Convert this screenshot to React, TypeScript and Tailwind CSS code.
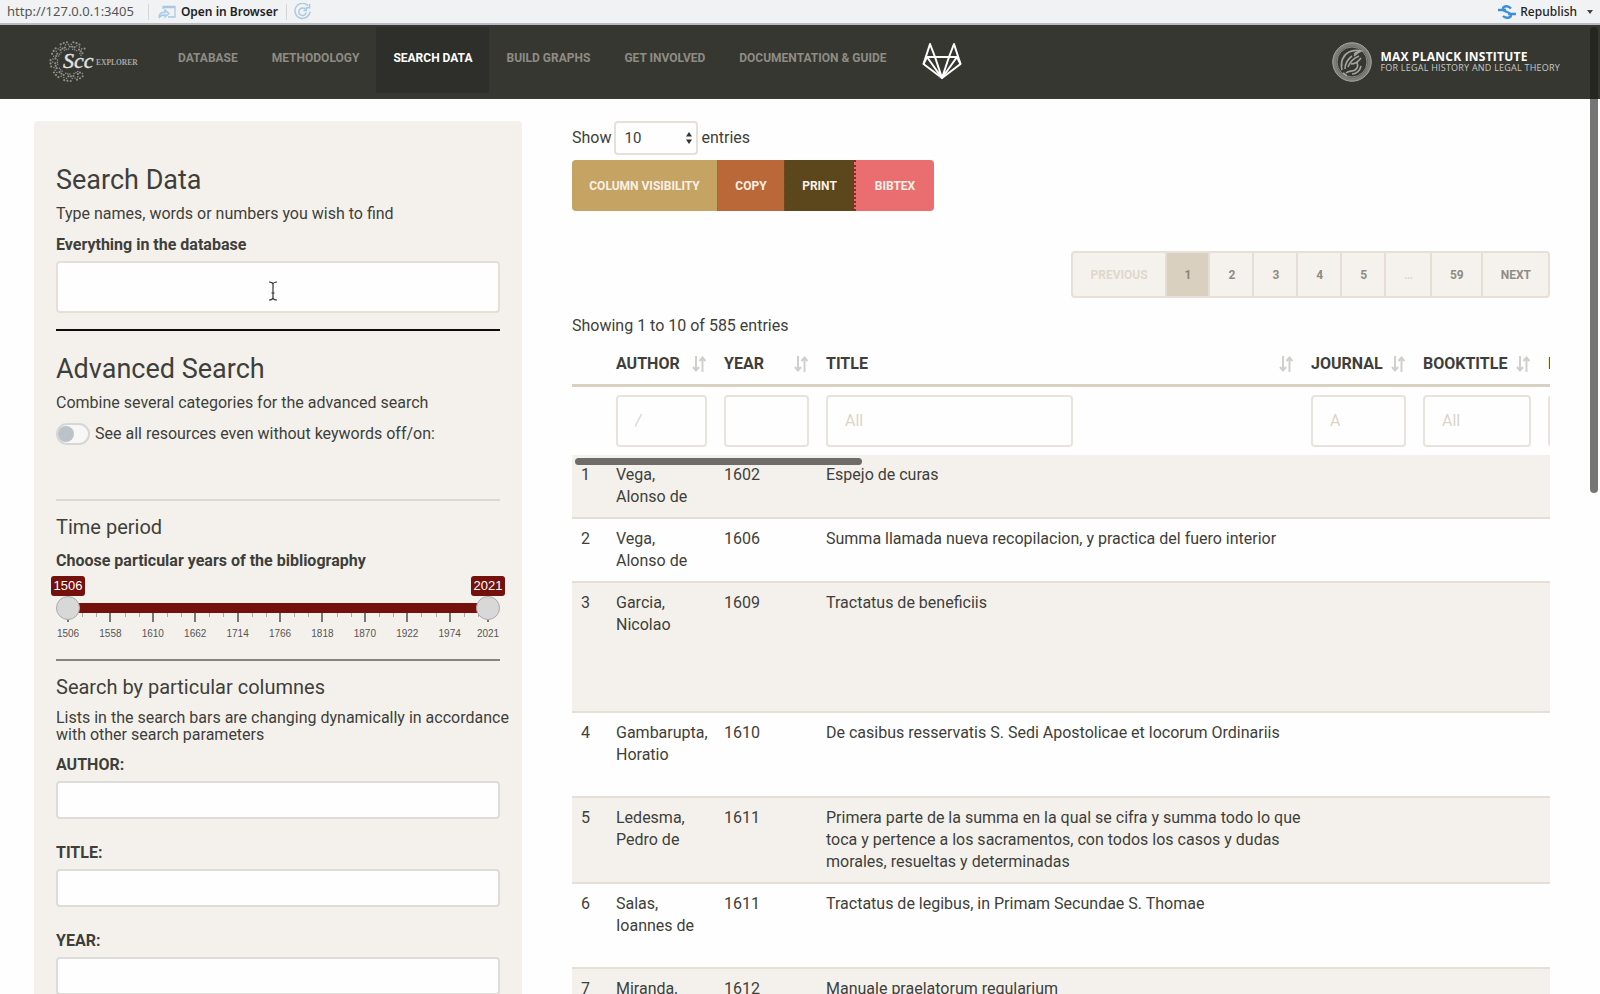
import type { ReactNode } from "react";

const ink = "text-[#3e3f3a]";

function SccLogo() {
  const dots: ReactNode[] = [];
  for (let ring = 0; ring < 4; ring++) {
    for (let i = 0; i < 30; i++) {
      const a = ((40 + i * 9.6 + ring * 4) * Math.PI) / 180;
      if ((i * 7 + ring * 5) % 4 === 0) continue;
      const r = 19.5 - ring * 2.3;
      dots.push(
        <circle key={`${ring}-${i}`} cx={21 + r * Math.cos(a)} cy={20.5 + r * Math.sin(a)} r={ring % 2 ? 0.8 : 1.1} />,
      );
    }
  }
  return (
    <svg viewBox="0 0 90 42" className="h-[42px] w-[90px]" role="img" aria-label="SCC Explorer">
      <g fill="#8f8f89">{dots}</g>
      <text x="14" y="27" fontFamily="Liberation Serif, serif" fontSize="22" fontStyle="italic" fill="#e4e4e0" stroke="#e4e4e0" strokeWidth="0.4">Scc</text>
      <text x="47" y="24" fontFamily="Liberation Serif, serif" fontSize="7.500" fontWeight="bold" fill="#a8a8a2">EXPLORER</text>
    </svg>
  );
}

function FoxLogo() {
  return (
    <svg viewBox="0 0 40 38" className="h-[38px] w-10" fill="none" stroke="#fff" strokeWidth="2" strokeLinejoin="round" aria-hidden="true">
      <path d="M20 36 L1.5 22 L8 2 L13 15 H27 L32 2 L38.500 22 Z" />
      <path d="M13 15 L20 36 L27 15 M5 15 H13 M27 15 H35 M5 15 L20 36 L35 15 M1.500 22 L5 15 M38.500 22 L35 15" />
    </svg>
  );
}

function Seal() {
  return (
    <svg viewBox="0 0 40 40" className="h-10 w-10" fill="none" stroke="#a5a5a0" aria-hidden="true">
      <circle cx="20" cy="20" r="17.500" stroke="#7d7d78" strokeWidth="4" />
      <circle cx="20" cy="20" r="19.200" strokeWidth="1" />
      <circle cx="20" cy="20" r="15" strokeWidth="0.800" />
      <path strokeWidth="1.600" d="M10 28c-2-8 1-15 7-18 4-2 8-2 12-1-3 1-5 3-7 5M13 27c0-6 3-10 7-13M16 25c2-5 6-9 11-11M19 22c3 0 7-2 10-6M12 14c-2 4-3 7-2 10M14 31c3-3 6-1 9-3s3-5 2-8M20 32c4 0 8-3 9-8M27 9l-5 3M11 31l4 3" />
    </svg>
  );
}

const navItems = ["Database", "Methodology", "Search data", "Build graphs", "Get involved", "Documentation & Guide"];

function SortIcon() {
  return (
    <svg viewBox="0 0 14 16" className="h-4 w-[14px] shrink-0" fill="none" stroke="#cfcfcb" strokeWidth="2" aria-hidden="true">
      <path d="M4 0V14M1 11L4 14.500L7 11" />
      <path d="M10.500 16V2M7.500 5L10.500 1.500L13.500 5" />
    </svg>
  );
}

const columns = [
  { name: "", placeholder: "", input: "" },
  { name: "Author", placeholder: "/", input: "w-full italic" },
  { name: "Year", placeholder: "", input: "w-full" },
  { name: "Title", placeholder: "All", input: "w-[247px]" },
  { name: "Journal", placeholder: "A", input: "w-full" },
  { name: "Booktitle", placeholder: "All", input: "w-full" },
  { name: "Publisher", placeholder: "All", input: "w-full" },
];

const rows = [
  { n: 1, author: ["Vega,", "Alonso de"], year: 1602, title: "Espejo de curas", h: "h-[63px]" },
  { n: 2, author: ["Vega,", "Alonso de"], year: 1606, title: "Summa llamada nueva recopilacion, y practica del fuero interior", h: "h-16" },
  { n: 3, author: ["Garcia,", "Nicolao"], year: 1609, title: "Tractatus de beneficiis", h: "h-[130px]" },
  { n: 4, author: ["Gambarupta,", "Horatio"], year: 1610, title: "De casibus resservatis S. Sedi Apostolicae et locorum Ordinariis", h: "h-[85px]" },
  { n: 5, author: ["Ledesma,", "Pedro de"], year: 1611, title: "Primera parte de la summa en la qual se cifra y summa todo lo que toca y pertence a los sacramentos, con todos los casos y dudas morales, resueltas y determinadas", h: "h-[86px]" },
  { n: 6, author: ["Salas,", "Ioannes de"], year: 1611, title: "Tractatus de legibus, in Primam Secundae S. Thomae", h: "h-[85px]" },
  { n: 7, author: ["Miranda,", "Luis de"], year: 1612, title: "Manuale praelatorum regularium", h: "h-16" },
];

const years = [1506, 1558, 1610, 1662, 1714, 1766, 1818, 1870, 1922, 1974, 2021];
const pct = (y: number) => ((y - 1506) / 515) * 100;

function YearSlider() {
  const minor: number[] = [];
  for (let y = 1506; y < 2021; y += 52) for (let k = 1; k < 3; k++) minor.push(y + (k * 52) / 3);
  return (
    <div className="relative mx-3 mt-[3px] h-[62px] font-['Liberation_Sans',sans-serif]">
      <div className="absolute inset-x-0 top-[27px] h-[10px] bg-[#74110c]" />
      {minor.filter((y) => y < 2021).map((y) => (
        <span key={y} className="absolute top-[37px] h-1 w-px bg-[#aaa]" style={{ left: `${pct(y)}%` }} />
      ))}
      {years.map((y) => (
        <span key={y} className="absolute top-[37px] flex w-10 -translate-x-1/2 flex-col items-center" style={{ left: `${pct(y)}%` }}>
          <span className="h-[9px] w-0.5 bg-[#777]" />
          <span className="mt-[6px] text-[10px] leading-3 text-[#555]">{y}</span>
        </span>
      ))}
      {[1506, 2021].map((y) => (
        <span key={y} className="absolute top-0 flex w-[34px] -translate-x-1/2 flex-col items-center" style={{ left: `${pct(y)}%` }}>
          <span className="w-full rounded-[3px] bg-[#74110c] text-center text-[13px] leading-5 text-white">{y}</span>
          <input
            type="range"
            aria-label={y === 1506 ? "First year" : "Last year"}
            min={1506}
            max={2021}
            defaultValue={y}
            className="size-6 appearance-none rounded-full border border-[#ababab] bg-[#d8d8d8] [&::-webkit-slider-thumb]:appearance-none"
          />
        </span>
      ))}
    </div>
  );
}

function Sidebar() {
  return (
    <aside className="rounded-[4px] bg-[#f4f1ed] px-[22px] pt-[41px]">
      <h2 className="text-[27px] leading-9">Search Data</h2>
      <p className="mt-1 leading-6">Type names, words or numbers you wish to find</p>
      <label htmlFor="all" className="mt-[7px] block font-bold leading-6">Everything in the database</label>
      <div className="relative mt-1">
        <input id="all" className="block h-[52px] w-full rounded-[4px] border-2 border-[#e6dfd8] bg-[#fefefe] px-4" />
        <svg viewBox="0 0 10 20" className="absolute left-[212px] top-5 h-5 w-[10px]" fill="none" stroke="#333" strokeWidth="1.200" aria-hidden="true">
          <path d="M1 1C3 1 5 2 5 3.500C5 2 7 1 9 1M5 3V17M1 19C3 19 5 18 5 16.500C5 18 7 19 9 19M3.500 12H6.500" />
        </svg>
      </div>
      <hr className="mt-4 border-t-2 border-[#0c0c0c]" />

      <h2 className="mt-5 text-[27px] leading-9">Advanced Search</h2>
      <p className="mt-1 leading-6">Combine several categories for the advanced search</p>
      <label className="mt-[7px] flex items-center gap-[5px] leading-6">
        <input
          type="checkbox"
          className="h-[22px] w-[34px] appearance-none rounded-full border-2 border-[#d5d6d6] bg-[#f8f7f5] before:block before:size-4 before:translate-y-px before:rounded-full before:bg-[#bcc3c8]"
        />
        See all resources even without keywords off/on:
      </label>
      <hr className="mt-[53px] border-t-2 border-[#dad8d4]" />

      <h3 className="mt-3 text-xl leading-7">Time period</h3>
      <p className="mt-2 font-bold leading-6">Choose particular years of the bibliography</p>
      <YearSlider />
      <hr className="mt-[21px] border-t-2 border-[#85847f]" />

      <h3 className="mt-3 text-xl leading-7">Search by particular columnes</h3>
      <p className="-mr-3 mt-2 leading-[17px]">
        Lists in the search bars are changing dynamically in accordance with other search parameters
      </p>
      <div className="mt-[10px] flex flex-col gap-[22px]">
        {["Author", "Title", "Year"].map((name) => (
          <div key={name}>
            <label htmlFor={`f-${name}`} className="block font-bold uppercase leading-6">{name}:</label>
            <input id={`f-${name}`} className="mt-1 block h-[38px] w-full rounded-[4px] border-2 border-[#dddcd9] bg-[#fefefe] px-3" />
          </div>
        ))}
      </div>
    </aside>
  );
}

function Pagination() {
  const items = ["Previous", "1", "2", "3", "4", "5", "…", "59", "Next"];
  return (
    <nav aria-label="Pages" className="mt-10 flex justify-end">
      <div className="flex h-[47px] overflow-hidden rounded-[4px] border-2 border-[#e6e0d8] bg-[#f5f2ee]">
        {items.map((t) => (
          <button
            key={t}
            disabled={t === "Previous" || t === "…"}
            className={`border-r-2 border-[#e4ded5] pl-[18px] pr-[17px] text-[12px] font-bold uppercase last:border-r-0 ${
              t === "1" ? "bg-[#dad0c0] text-[#8a857a]" : t === "Previous" || t === "…" ? "text-[#dfd7ca]" : "text-[#8e8c84]"
            }`}
          >
            {t}
          </button>
        ))}
      </div>
    </nav>
  );
}

function Results() {
  return (
    <section className="min-w-0">
      <div className="flex h-[34px] items-center gap-[3px]">
        <label htmlFor="len">Show</label>
        <div className="relative">
          <select id="len" className="block h-[34px] w-[84px] appearance-none rounded-[4px] border-2 border-[#e6e0d8] bg-[#fefefe] pl-2 text-[15px]">
            <option>10</option>
          </select>
          <svg viewBox="0 0 6 12" className="pointer-events-none absolute right-[6px] top-[11px] h-3 w-[6px]" fill="#333" aria-hidden="true">
            <path d="M3 0L6 4.500H0ZM3 12L6 7.500H0Z" />
          </svg>
        </div>
        <span>entries</span>
      </div>
      <div className="mt-[5px] inline-flex h-[51px] overflow-hidden rounded-[4px] text-[12px] font-bold text-[#f8f0e8]">
        <button className="w-[145px] bg-[#c5a363] uppercase">Column visibility</button>
        <button className="w-[67px] border-l border-dotted border-[#8a6a3a] bg-[#ba6837] uppercase">Copy</button>
        <button className="w-[70px] border-l border-dotted border-[#7a4a22] bg-[#5c461b] uppercase">Print</button>
        <button className="w-20 border-l-2 border-dotted border-[#8c2a22] bg-[#ea6e70] uppercase">Bibtex</button>
      </div>
      <Pagination />
      <p className="mt-4 leading-6">Showing 1 to 10 of 585 entries</p>

      <div className="relative mt-[3px] overflow-hidden">
        <table className="w-[1093px] table-fixed border-collapse">
          <colgroup>
            <col className="w-[35px]" />
            <col className="w-[108px]" />
            <col className="w-[102px]" />
            <col className="w-[485px]" />
            <col className="w-[112px]" />
            <col className="w-[125px]" />
            <col className="w-[126px]" />
          </colgroup>
          <thead>
            <tr className="h-[44px] border-b-[3px] border-[#dbd1c3]">
              {columns.map((c) => (
                <th key={c.name} className="px-[9px] pt-1 text-left font-bold uppercase">
                  {c.name && (
                    <span className="flex items-center justify-between">
                      {c.name}
                      <SortIcon />
                    </span>
                  )}
                </th>
              ))}
            </tr>
            <tr className="h-[70px]">
              {columns.map((c) => (
                <td key={c.name} className="pl-[9px] pr-2">
                  {c.name && (
                    <input
                      aria-label={`Filter ${c.name}`}
                      placeholder={c.placeholder}
                      className={`block h-[52px] rounded-[4px] border-2 border-[#e8e3dc] bg-[#fefefe] px-[17px] placeholder:text-[#dcd4c8] ${c.input}`}
                    />
                  )}
                </td>
              ))}
            </tr>
          </thead>
          <tbody>
            {rows.map((r) => (
              <tr key={r.n} className={`border-b-2 border-[#e5dfd7] align-top odd:bg-[#f4f1ed] ${r.h}`}>
                <td className="pl-[9px] pt-[9px] leading-[22px]">{r.n}</td>
                <td className="pl-[9px] pt-[9px] leading-[22px]">
                  {r.author.map((a) => (
                    <span key={a} className="block">{a}</span>
                  ))}
                </td>
                <td className="pl-[9px] pt-[9px] leading-[22px]">{r.year}</td>
                <td className="pl-[9px] pt-[9px] leading-[22px]">{r.title}</td>
                <td />
                <td />
                <td />
              </tr>
            ))}
          </tbody>
        </table>
        <div className="absolute left-[3px] top-[117px] h-[7px] w-[287px] rounded-full bg-[#6d6c68]" />
      </div>
    </section>
  );
}

export default function App() {
  return (
    <div className={`relative flex h-screen flex-col overflow-hidden bg-[#fefefe] font-[Roboto,sans-serif] text-[16px] ${ink}`}>
      <div className="flex h-[25px] shrink-0 items-center border-b-2 border-[#b9bbc0] bg-[#f1f2f4] px-[7px] font-['Noto_Sans',sans-serif] text-[12px] text-[#333]">
        <span className="text-[13px] text-[#555]">http://127.0.0.1:3405</span>
        <span className="ml-[14px] h-4 w-px bg-[#d5d5d5]" />
        <button className="ml-[9px] flex items-center gap-[5px] font-semibold text-[#222]">
          <svg viewBox="0 0 18 14" className="h-[14px] w-[18px]" fill="none" stroke="#a9c9e2" strokeWidth="1.300" aria-hidden="true">
            <path d="M5 4V1.500H17V12H10M5 2.500H17" />
            <path d="M1 13C1 8 4 7 7 7V5L11 8.500L7 12V10C4 10 2 11 1 13Z" fill="#dcebf5" />
          </svg>
          Open in Browser
        </button>
        <span className="ml-2 h-4 w-px bg-[#d5d5d5]" />
        <button aria-label="Reload" className="ml-[7px]">
          <svg viewBox="0 0 18 18" className="size-[17px]" fill="none" stroke="#a9c9e2" strokeWidth="1.500" aria-hidden="true">
            <path d="M15 3A8 8 0 1 0 17 9M16.500 1V5H12.500" />
            <path d="M12 6.500A4 4 0 1 0 13 10M13 5V8H10" />
          </svg>
        </button>
        <button className="ml-auto flex items-center gap-1 font-medium text-[#222]">
          <svg viewBox="0 0 18 14" className="h-[14px] w-[18px]" fill="none" stroke="#3d8fd8" strokeWidth="2.400" aria-hidden="true">
            <path d="M13 3.500C10 0 5 1 5 4S13 7 13 10S8 14 5 11" />
            <path d="M0 5H8M10 9H18" />
          </svg>
          Republish
          <svg viewBox="0 0 6 4" className="ml-[6px] h-1 w-[6px]" fill="#444" aria-hidden="true"><path d="M0 0H6L3 4Z" /></svg>
        </button>
      </div>

      <header className="flex h-[74px] shrink-0 items-center bg-[#373731] pl-[49px] pr-10">
        <a href="#home" className="w-28"><SccLogo /></a>
        <nav className="flex h-full items-start pt-[2px]">
          {navItems.map((t) => (
            <a
              key={t}
              href="#nav"
              className={`flex h-[66px] items-center px-[17px] pb-1 text-[12px] font-bold uppercase ${
                t === "Search data" ? "bg-[#2e2f2a] text-white" : "text-[#8e8c84]"
              }`}
            >
              {t}
            </a>
          ))}
          <a href="#repository" aria-label="Repository" className="ml-[18px] mt-[15px]"><FoxLogo /></a>
        </nav>
        <div className="ml-auto flex items-center gap-2">
          <Seal />
          <div className="font-['Open_Sans',sans-serif] text-[9px] uppercase leading-[11px] tracking-wide text-[#c9c9c5]">
            <div className="text-[12px] font-bold text-white">Max Planck Institute</div>
            for legal history and legal theory
          </div>
        </div>
      </header>

      <main className="grid grid-cols-[488px_minmax(0,1fr)] gap-[50px] pl-[34px] pr-[50px] pt-[22px]">
        <Sidebar />
        <Results />
      </main>
      <div className="absolute right-[2px] top-[27px] h-[466px] w-2 rounded-full bg-[#1a1a18]/60" />
    </div>
  );
}
